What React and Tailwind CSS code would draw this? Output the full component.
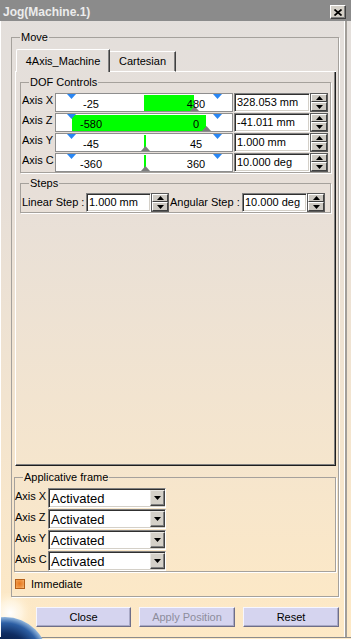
import React from 'react';

const TriDown = ({ fill = '#000', w = 9, h = 5 }) => (
  <svg width={w} height={h} viewBox={`0 0 ${w} ${h}`} className="block">
    <polygon points={`0,0 ${w},0 ${w / 2},${h}`} fill={fill} />
  </svg>
);
const TriUp = ({ fill = '#000', w = 9, h = 5 }) => (
  <svg width={w} height={h} viewBox={`0 0 ${w} ${h}`} className="block">
    <polygon points={`0,${h} ${w / 2},0 ${w},${h}`} fill={fill} />
  </svg>
);

function Group({ legend, className, innerClass, children }) {
  return (
    <fieldset className={`border border-[#a5a19c] shadow-[1px_1px_0_#ffffff] ${className}`}>
      <legend className="ml-[8px] px-[1px] leading-[13px]">{legend}</legend>
      <div className={innerClass}>{children}</div>
    </fieldset>
  );
}

const sunk =
  'bg-white border border-t-[#808080] border-l-[#808080] border-b-white border-r-white shadow-[inset_1px_1px_0_#303030,inset_-1px_-1px_0_#d4d0c8]';

function SpinBtn({ up, h }) {
  return (
    <div
      className={`${h} bg-[#cdc9c2] border border-t-white border-l-white border-r-[#404040] border-b-[#404040] flex items-center justify-center`}
    >
      {up ? <TriUp w={7} h={4} /> : <TriDown w={7} h={4} />}
    </div>
  );
}

function Spinner() {
  return (
    <div className="w-[16px] h-[17px] flex flex-col shrink-0 outline outline-1 outline-[#5a5a5a]">
      <SpinBtn up h="h-[8px]" />
      <SpinBtn h="h-[9px]" />
    </div>
  );
}

function Field({ w, children }) {
  return (
    <div className={`${w} h-[19px] ${sunk} flex items-center pl-[2px] leading-none whitespace-nowrap overflow-hidden shrink-0`}>
      {children}
    </div>
  );
}

const rows = [
  { label: 'Axis X', l: '-25', r: '480', bar: { left: 88, w: 50 }, tri: 134, val: '328.053 mm' },
  { label: 'Axis Z', l: '-580', r: '0', bar: { left: 16, w: 134 }, tri: 146, val: '-41.011 mm' },
  { label: 'Axis Y', l: '-45', r: '45', line: 88, tri: 85, val: '1.000 mm' },
  { label: 'Axis C', l: '-360', r: '360', line: 88, tri: 85, val: '10.000 deg' },
];

function Slider({ row }) {
  return (
    <div className="relative w-[178px] h-[19px] border border-[#8e8e8e] bg-white shrink-0">
      {row.bar && (
        <div
          className="absolute top-[1px] bottom-0 bg-[#00ff00]"
          style={{ left: row.bar.left, width: row.bar.w }}
        />
      )}
      {row.line !== undefined && (
        <div className="absolute top-[1px] h-[13px] w-[2px] bg-[#00ff00]" style={{ left: row.line }} />
      )}
      <div className="absolute top-0 left-[11px]">
        <TriDown fill="#2a86f2" w={9} h={5} />
      </div>
      <div className="absolute top-0 left-[157px]">
        <TriDown fill="#2a86f2" w={9} h={5} />
      </div>
      <div className="absolute bottom-0" style={{ left: row.tri }}>
        <TriUp fill="#7c7c7c" w={9} h={5} />
      </div>
      <span className="absolute top-[4px] left-[15px] w-[40px] text-center leading-[13px]">{row.l}</span>
      <span className="absolute top-[4px] left-[120px] w-[40px] text-center leading-[13px]">{row.r}</span>
    </div>
  );
}

function DofRow({ row }) {
  return (
    <div className="flex h-[19px] items-center">
      <div className="w-[33px] self-start pt-[1px] leading-[13px] whitespace-nowrap">{row.label}</div>
      <Slider row={row} />
      <div className="w-[1px]" />
      <Field w="w-[76px]">{row.val}</Field>
      <div className="w-[1px]" />
      <Spinner />
    </div>
  );
}

function Combo({ label }) {
  return (
    <div className="flex h-[20px] items-center">
      <div className="w-[33px] self-start pt-[2px] leading-[13px] whitespace-nowrap">{label}</div>
      <div className={`w-[118px] h-[20px] ${sunk} flex items-center`}>
        <span className="flex-1 pl-[2px] text-[13px] leading-none">Activated</span>
        <div className="w-[15px] h-[16px] bg-[#d4d0c8] border border-t-[#e8e6e2] border-l-[#e8e6e2] border-r-[#404040] border-b-[#404040] shadow-[inset_-1px_-1px_0_#808080] flex items-center justify-center">
          <TriDown w={7} h={4} />
        </div>
      </div>
    </div>
  );
}

function Btn({ w, disabled, children }) {
  return (
    <div
      className={`${w} h-[20px] bg-[#d5d4ef] border border-t-[#f6f6ff] border-l-[#f6f6ff] border-r-[#6e6e88] border-b-[#6e6e88] shadow-[inset_-1px_-1px_0_#a9a9c6] flex items-center justify-center leading-none ${
        disabled ? 'text-[#8d8d9c]' : 'text-black'
      }`}
    >
      {children}
    </div>
  );
}

export default function App() {
  return (
    <div className="relative w-[351px] h-[639px] overflow-hidden flex flex-col font-['Liberation_Sans',Arial,sans-serif] text-[11px] text-black bg-[linear-gradient(180deg,#e3dfdc_0%,#e7dfd8_30%,#f2e4d0_62%,#fee9c5_100%)]">
      {/* Title bar */}
      <div className="h-[21px] shrink-0 bg-[#8b8b8b] flex items-center justify-between pl-[3px] pr-[5px]">
        <span className="font-bold text-[12px] text-[#ececec] leading-none pt-[2px] whitespace-nowrap">Jog(Machine.1)</span>
        <div className="w-[16px] h-[14px] mt-[3px] bg-[#d4d0c8] border border-t-white border-l-white border-r-[#404040] border-b-[#404040] shadow-[inset_-1px_-1px_0_#808080] flex items-center justify-center">
          <svg width="8" height="7" viewBox="0 0 8 7" className="block">
            <path d="M0.5 0.5L7.5 6.5M7.5 0.5L0.5 6.5" stroke="#000" strokeWidth="1.7" />
          </svg>
        </div>
      </div>

      {/* Globe decoration */}
      <svg className="absolute left-0 bottom-0" width="56" height="46" viewBox="0 0 56 46">
        <defs>
          <radialGradient id="glow" cx="10" cy="20" r="24" gradientUnits="userSpaceOnUse">
            <stop offset="0" stopColor="#ffffff" stopOpacity="1" />
            <stop offset="0.5" stopColor="#fff6e4" stopOpacity="0.8" />
            <stop offset="1" stopColor="#fde9c5" stopOpacity="0" />
          </radialGradient>
          <radialGradient id="ball" cx="5" cy="67" r="43" gradientUnits="userSpaceOnUse">
            <stop offset="0" stopColor="#02081c" />
            <stop offset="0.62" stopColor="#0f2d62" />
            <stop offset="0.86" stopColor="#2d5fa4" />
            <stop offset="1" stopColor="#94b8de" />
          </radialGradient>
        </defs>
        <rect width="56" height="46" fill="url(#glow)" />
        <circle cx="5" cy="67" r="43" fill="url(#ball)" />
      </svg>

      {/* Body */}
      <div className="flex-1 flex min-h-0">
        <div className="relative w-[347px] border-r-2 border-r-[#a29e99] shadow-[inset_1px_0_0_#ffffff,inset_-1px_0_0_#ffffff] pl-[11px] pt-[10px]">
          <Group legend="Move" className="w-[328px]" innerClass="pt-[5px] pl-[3px] pr-[2px] pb-[6px]">
            {/* Tabs */}
            <div className="flex items-end h-[23px]">
              <div className="w-px h-px bg-white" />
              <div className="w-[94px] h-[23px] border-t border-l border-white border-r border-r-[#404040] shadow-[inset_-1px_0_0_#808080] rounded-tl-[2px] flex items-center justify-center leading-none whitespace-nowrap">
                4Axis_Machine
              </div>
              <div className="w-[66px] h-[21px] border-t border-t-white border-r border-r-[#404040] border-b border-b-white shadow-[inset_-1px_0_0_#808080] flex items-center justify-center leading-none whitespace-nowrap">
                Cartesian
              </div>
              <div className="flex-1 h-px bg-white" />
            </div>
            {/* Panel */}
            <div className="h-[394px] border-l border-l-white border-r border-b border-r-[#1e1e1e] border-b-[#1e1e1e] shadow-[inset_-1px_-1px_0_#808080] pt-[4px] px-[4px]">
              <Group legend="DOF Controls" innerClass="pt-[4px] pl-[1px] flex flex-col gap-[1px]">
                {rows.map((r) => (
                  <DofRow key={r.label} row={r} />
                ))}
              </Group>
              <Group legend="Steps" className="mt-[4px]" innerClass="pt-[3px] pl-[1px] flex items-center h-[22px]">
                <div className="w-[64px] whitespace-nowrap leading-[13px]">Linear Step :</div>
                <Field w="w-[65px]">1.000 mm</Field>
                <div className="w-[1px]" />
                <Spinner />
                <div className="w-[2px]" />
                <div className="w-[72px] whitespace-nowrap leading-[13px]">Angular Step :</div>
                <Field w="w-[65px]">10.000 deg</Field>
                <div className="w-[1px]" />
                <Spinner />
              </Group>
            </div>
            {/* Applicative frame */}
            <Group legend="Applicative frame" className="mt-[5px] -ml-px w-[322px]" innerClass="pt-[4px] flex flex-col gap-[1px]">
              <Combo label="Axis X" />
              <Combo label="Axis Z" />
              <Combo label="Axis Y" />
              <Combo label="Axis C" />
            </Group>
            {/* Immediate */}
            <div className="mt-[6px] h-[12px] flex items-center">
              <div className="w-[10px] h-[10px] border border-[#b5601a] bg-[radial-gradient(circle_at_45%_45%,#e8781e_0%,#ef9848_60%,#f8c07c_100%)]" />
              <span className="ml-[6px] leading-none">Immediate</span>
            </div>
          </Group>

          {/* Buttons */}
          <div className="relative z-10 flex gap-[8px] mt-[10px] ml-[25px]">
            <Btn w="w-[95px]">Close</Btn>
            <Btn w="w-[96px]" disabled>
              Apply Position
            </Btn>
            <Btn w="w-[96px]">Reset</Btn>
          </div>
        </div>
      </div>
      <div className="h-[2px] shrink-0 border-t border-[#8c8c8c]" />
    </div>
  );
}
